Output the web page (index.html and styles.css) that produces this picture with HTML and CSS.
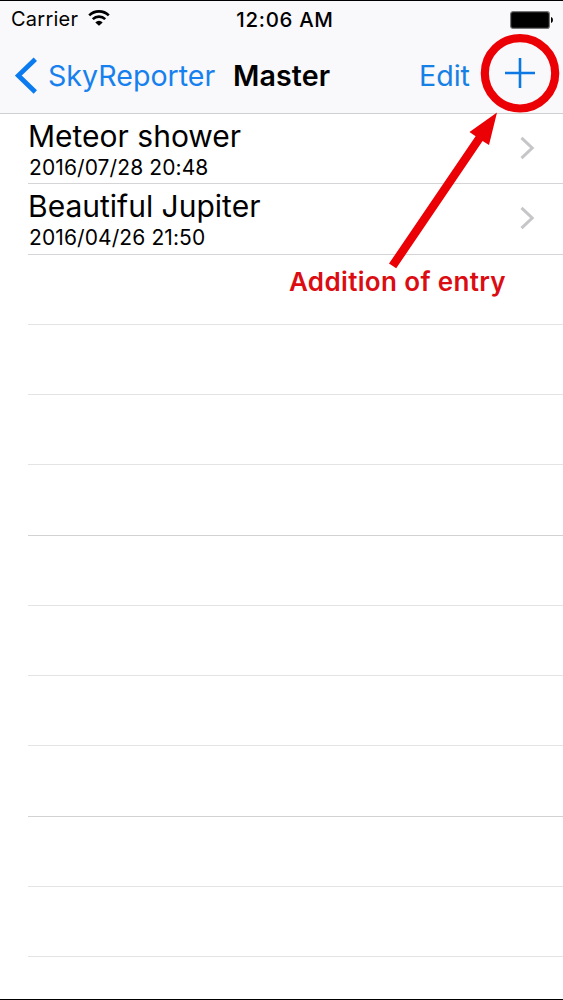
FILE: index.html
```html
<!DOCTYPE html>
<html lang="en">
<head>
<meta charset="utf-8">
<title>Master</title>
<link rel="stylesheet" href="styles.css">
</head>
<body>
<div class="screen">
  <header class="top">
    <div class="status">
      <div class="network"><span class="carrier">Carrier</span>
        <svg class="wifi" width="22" height="16" viewBox="0 0 22 16" fill="none" stroke="#000" stroke-width="2.6"><path d="M1.2 5.4a14 14 0 0 1 19.6 0M4.8 9.2a8.8 8.8 0 0 1 12.4 0"/><path d="M11 15.7 7.3 12.4a5.2 5.2 0 0 1 7.4 0Z" fill="#000" stroke="none"/></svg>
      </div>
      <span class="time">12:06 AM</span>
      <svg class="battery" width="44" height="18" viewBox="0 0 44 18"><rect x=".6" y=".6" width="38.8" height="16.8" rx="2.5" fill="#000" stroke="#777" stroke-width="1.2"/><path d="M41 6c2.6.6 2.6 5.4 0 6Z"/></svg>
    </div>
    <nav class="nav">
      <a class="back"><svg width="23" height="38" viewBox="0 0 23 38" fill="none" stroke="#0b7bf0" stroke-width="4.8"><path d="M20.3 2.3 3.3 18.6 20.3 34.9"/></svg><span class="back-label">SkyReporter</span></a>
      <h1 class="title">Master</h1>
      <a class="edit">Edit</a>
      <svg class="plus" width="30" height="30" viewBox="0 0 30 30" stroke="#0b78e3" stroke-width="2.6"><path d="M0 15h30M15 0v30"/></svg>
    </nav>
  </header>
  <main class="list">
    <div class="row"><div><div class="name">Meteor shower</div><div class="date">2016/07/28 20:48</div></div><svg class="chevron" width="15" height="24" viewBox="0 0 15 24"><path d="M1.5 1.8 12.2 12 1.5 22.2"/></svg></div>
    <div class="row"><div><div class="name">Beautiful Jupiter</div><div class="date">2016/04/26 21:50</div></div><svg class="chevron" width="15" height="24" viewBox="0 0 15 24"><path d="M1.5 1.8 12.2 12 1.5 22.2"/></svg></div>
    <div class="row empty"></div><div class="row empty"></div><div class="row empty"></div><div class="row empty strong"></div><div class="row empty"></div><div class="row empty"></div><div class="row empty"></div><div class="row empty strong"></div><div class="row empty"></div><div class="row empty"></div>
  </main>
  <svg class="callout" width="563" height="310" viewBox="0 0 563 310"><circle cx="520" cy="73.3" r="35.2" fill="none" stroke="#eb0005" stroke-width="8.2"/><path fill="#eb0005" d="M497 112.5 489 145 482.6 140.9 396.2 268.3 389 263.6 475.6 136.3 469.5 132Z"/></svg>
  <div class="hint">Addition of entry</div>
</div>
</body>
</html>
```
FILE: styles.css
```css
* { box-sizing: border-box; }
body { margin: 0; background: #fff; font-family: Inter, "Liberation Sans", sans-serif; color: #000; }
.screen { position: relative; width: 563px; height: 1000px; overflow: hidden; border-top: 1px solid #000; border-bottom: 1px solid #000; white-space: nowrap; }
.top { height: 113px; background: #f9f8fa; border-bottom: 1px solid #cfd1d1; }
.status { height: 37px; display: grid; grid-template-columns: 1fr auto 1fr; align-items: center; padding: 0 9px 0 11px; font-size: 20px; line-height: 37px; }
.network { display: flex; align-items: center; gap: 10px; }
.carrier { letter-spacing: 0.25px; }
.wifi { display: block; margin-top: -3px; }
.time { font-size: 20.4px; font-weight: 500; letter-spacing: 0.7px; padding-left: 5px; }
.battery { justify-self: end; display: block; }
.nav { height: 75px; display: flex; align-items: center; padding: 0 28px 0 15px; font-size: 28.6px; line-height: 75px; }
.back { display: flex; align-items: center; gap: 10px; width: 218px; color: #1681ee; }
.back-label { letter-spacing: 0; }
.title { margin: 0; width: 186px; font-size: 28.6px; font-weight: 600; letter-spacing: 0.1px; }
.edit { width: 86px; color: #1680e5; }
.plus { display: block; flex: none; margin-top: -6px; }
.list { margin-left: 28px; }
.row { height: 70.26px; display: flex; justify-content: space-between; padding-right: 28px; border-bottom: 1px solid #d5d5d8; }
.empty { border-color: #e4e4e5; }
.strong { border-color: #d2d2d3; }
.name { height: 42px; font-size: 30px; line-height: 44px; letter-spacing: 0; }
.date { height: 26px; padding-left: 1px; font-size: 21px; line-height: 24px; letter-spacing: 0.1px; }
.chevron { margin-top: 22px; fill: none; stroke: #c6c6c9; stroke-width: 3; }
.callout { position: absolute; left: 0; top: -1px; }
.hint { position: absolute; left: 289px; top: 264px; color: #db0d12; font-size: 26px; line-height: 34px; font-weight: 600; letter-spacing: 0.35px; }
```
